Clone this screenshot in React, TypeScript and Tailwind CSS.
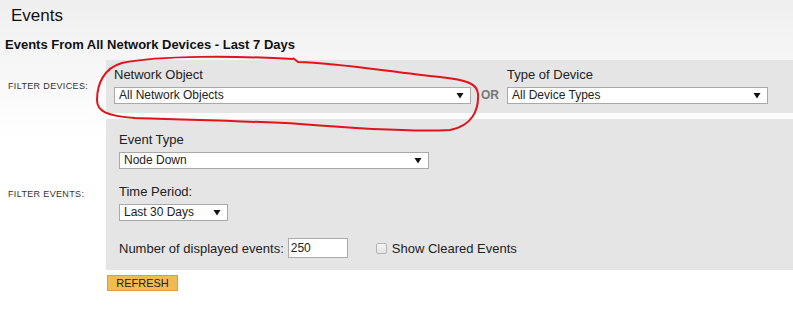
const Arrow = () => (
    <svg width="8" height="7" viewBox="0 0 8 7" className="shrink-0">
        <path d="M0.5 1 L7.5 1 L4 6.5 Z" fill="#111" />
    </svg>
);

const Select = ({ value, width }: { value: string; width: string }) => (
    <div
        className={`${width} h-[17px] bg-white border border-[#a9a9a9] flex items-center justify-between pl-[4px] pr-[6px] text-[12px] leading-[15px] text-[#222]`}
    >
        <span>{value}</span>
        <Arrow />
    </div>
);

const Ellipse = () => (
    <svg
        width="793"
        height="311"
        viewBox="0 0 793 311"
        className="absolute left-0 top-0 pointer-events-none"
    >
        <path
            d="M293 59 C240 56 160 55 122 63 C104 68 97 84 97 100 C97 111 106 116 135 118 C190 120 250 121 300 124 C350 128 410 132 450 130 C472 126 479 110 478 94 C477 83 466 80 440 77 C390 72 340 63 298 62 L293 58"
            fill="none"
            stroke="#e0141b"
            strokeWidth="2"
            strokeLinejoin="round"
        />
    </svg>
);

const App = () => {
    return (
        <div
            className="relative w-[793px] h-[311px] overflow-hidden bg-[linear-gradient(to_bottom,#efefef_0px,#ffffff_140px)] text-[#222]"
            style={{ fontFamily: '"Liberation Sans", Arial, sans-serif' }}
        >
            <h1 className="pt-[6px] pl-[11px] text-[17px] leading-[20px] text-[#111]">
                Events
            </h1>
            <h2 className="mt-[12px] pl-[5px] text-[13px] leading-[14px] font-bold text-[#111]">
                Events From All Network Devices - Last 7 Days
            </h2>

            <div className="mt-[8px] flex items-center">
                <div className="w-[106px] pl-[8px] text-[9px] tracking-[0.35px] text-[#333]">
                    FILTER DEVICES:
                </div>
                <div className="flex-1 h-[53px] bg-[#e5e5e5] pl-[8px] pt-[7px] flex">
                    <div className="flex flex-col gap-[5px]">
                        <span className="text-[13px] leading-[15px]">Network Object</span>
                        <Select value="All Network Objects" width="w-[357px]" />
                    </div>
                    <span className="ml-[10px] mt-[21px] text-[12px] leading-[15px] font-bold text-[#777]">
                        OR
                    </span>
                    <div className="ml-[8px] flex flex-col gap-[5px]">
                        <span className="text-[13px] leading-[15px]">Type of Device</span>
                        <Select value="All Device Types" width="w-[261px]" />
                    </div>
                </div>
            </div>

            <div className="mt-[6px] flex items-center">
                <div className="w-[106px] pl-[8px] text-[9px] tracking-[0.35px] text-[#333]">
                    FILTER EVENTS:
                </div>
                <div className="flex-1 h-[151px] bg-[#e5e5e5] pl-[13px] pt-[13px] flex flex-col">
                    <span className="text-[13px] leading-[15px]">Event Type</span>
                    <div className="mt-[5px]">
                        <Select value="Node Down" width="w-[310px]" />
                    </div>
                    <span className="mt-[15px] text-[13px] leading-[15px]">Time Period:</span>
                    <div className="mt-[5px]">
                        <Select value="Last 30 Days" width="w-[109px]" />
                    </div>
                    <div className="mt-[17px] flex items-center text-[13px] leading-[15px]">
                        <span>Number of displayed events:</span>
                        <div className="ml-[4px] w-[60px] h-[20px] bg-white border border-[#a9a9a9] pl-[2px] flex items-center text-[12px]">
                            250
                        </div>
                        <span className="ml-[28px] w-[11px] h-[11px] rounded-[2px] border border-[#b5b5b5] bg-[linear-gradient(to_bottom,#f4f4f4,#e2e2e2)]" />
                        <span className="ml-[5px]">Show Cleared Events</span>
                    </div>
                </div>
            </div>

            <button className="mt-[4px] ml-[107px] w-[71px] h-[16px] bg-[#f0bb50] border border-[#d7a23e] text-[11px] leading-[14px] text-[#222]">
                REFRESH
            </button>

            <Ellipse />
        </div>
    );
};

export default App;
